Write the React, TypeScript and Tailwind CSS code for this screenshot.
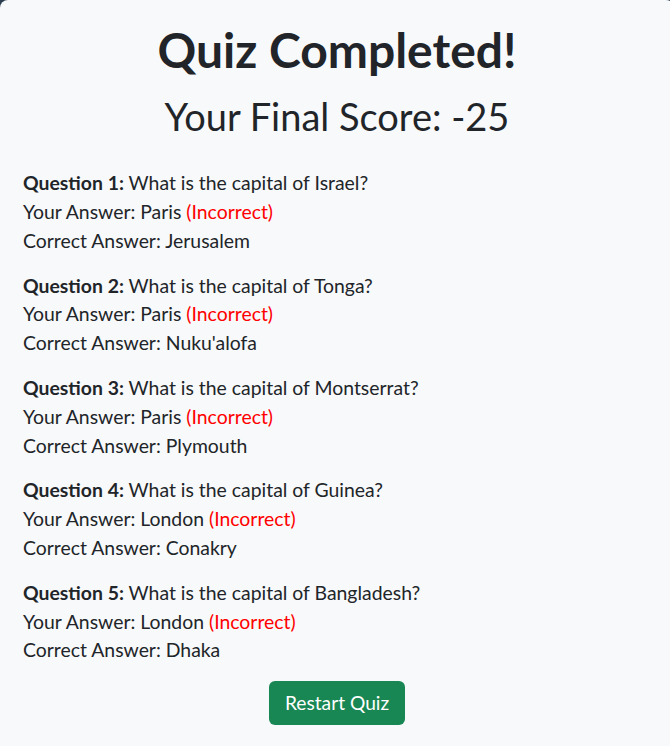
import React from 'react';

const results = [
  { q: 'What is the capital of Israel?', answer: 'Paris', correct: 'Jerusalem' },
  { q: 'What is the capital of Tonga?', answer: 'Paris', correct: "Nuku'alofa" },
  { q: 'What is the capital of Montserrat?', answer: 'Paris', correct: 'Plymouth' },
  { q: 'What is the capital of Guinea?', answer: 'London', correct: 'Conakry' },
  { q: 'What is the capital of Bangladesh?', answer: 'London', correct: 'Dhaka' },
];

const App = () => {
  return (
    <div className="w-[670px] h-[746px] overflow-hidden bg-[#2c3e50] font-['Lato','Liberation_Sans',sans-serif] text-[#212529]">
      <div className="w-[674px] h-[760px] bg-[#f8f9fa] rounded-lg pt-[21px] px-[23px]">
        <h1 className="text-center text-[48px] leading-[1.2] font-bold">Quiz Completed!</h1>
        <h2 className="mt-[15px] text-center text-[38px] leading-[1.2] font-normal">Your Final Score: -25</h2>

        <div className="mt-[30px] text-[19.4px] leading-[28.8px]">
          {results.map((r, i) => (
            <div key={i} className="mb-4">
              <div>
                <strong className="font-bold">Question {i + 1}:</strong> {r.q}
              </div>
              <div>
                Your Answer: {r.answer} <span className="text-[#ff0000]">(Incorrect)</span>
              </div>
              <div>Correct Answer: {r.correct}</div>
            </div>
          ))}
        </div>

        <div className="flex justify-center">
          <button className="h-[44px] px-4 rounded-md bg-[#198754] text-white text-[19.2px]">
            Restart Quiz
          </button>
        </div>
      </div>
    </div>
  );
};

export default App;
